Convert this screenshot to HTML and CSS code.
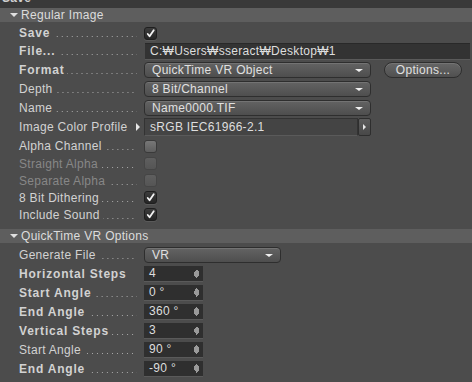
FILE: index.html
```html
<!DOCTYPE html>
<html lang="en">
<head>
  <meta charset="UTF-8">
  <title>Save</title>
  <link rel="stylesheet" href="styles.css">
</head>
<body>
  <div class="tab"><span>Save</span></div>

  <div class="head"><i class="tri"></i>Regular Image</div>
  <div class="group">
    <div class="row h18">
      <span class="lbl b"><span>Save</span><i class="dots"></i></span>
      <span class="cb on"><svg viewBox="0 0 12 12"><path d="M3 6.5 L5 9 L9.5 2.5"/></svg></span>
    </div>
    <div class="row h18">
      <span class="lbl b"><span>File...</span><i class="dots"></i></span>
      <span class="field wide">C:₩Users₩sseract₩Desktop₩1</span>
    </div>
    <div class="row">
      <span class="lbl b"><span>Format</span><i class="dots"></i></span>
      <span class="ctl">
        <span class="drop fmt">QuickTime VR Object<i class="arr"></i></span>
        <span class="btn">Options...</span>
      </span>
    </div>
    <div class="row">
      <span class="lbl"><span>Depth</span><i class="dots"></i></span>
      <span class="drop fmt">8 Bit/Channel<i class="arr"></i></span>
    </div>
    <div class="row">
      <span class="lbl"><span>Name</span><i class="dots"></i></span>
      <span class="drop fmt">Name0000.TIF<i class="arr"></i></span>
    </div>
    <div class="row h20">
      <span class="lbl"><span>Image Color Profile</span><i class="more"></i></span>
      <span class="ctl">
        <span class="field icp">sRGB IEC61966-2.1</span>
        <span class="side"><i></i></span>
      </span>
    </div>
    <div class="row h18">
      <span class="lbl"><span>Alpha Channel</span><i class="dots"></i></span>
      <span class="cb"></span>
    </div>
    <div class="row h17 off">
      <span class="lbl"><span>Straight Alpha</span><i class="dots"></i></span>
      <span class="cb"></span>
    </div>
    <div class="row h17 off">
      <span class="lbl"><span>Separate Alpha</span><i class="dots"></i></span>
      <span class="cb"></span>
    </div>
    <div class="row h17">
      <span class="lbl"><span>8 Bit Dithering</span><i class="dots"></i></span>
      <span class="cb on"><svg viewBox="0 0 12 12"><path d="M3 6.5 L5 9 L9.5 2.5"/></svg></span>
    </div>
    <div class="row h17">
      <span class="lbl"><span>Include Sound</span><i class="dots"></i></span>
      <span class="cb on"><svg viewBox="0 0 12 12"><path d="M3 6.5 L5 9 L9.5 2.5"/></svg></span>
    </div>
  </div>

  <div class="head"><i class="tri"></i>QuickTime VR Options</div>
  <div class="group">
    <div class="row">
      <span class="lbl"><span>Generate File</span><i class="dots"></i></span>
      <span class="drop gen">VR<i class="arr"></i></span>
    </div>
    <div class="row">
      <span class="lbl b"><span>Horizontal Steps</span></span>
      <span class="num">4<i class="spin"></i></span>
    </div>
    <div class="row">
      <span class="lbl b"><span>Start Angle</span><i class="dots"></i></span>
      <span class="num">0 °<i class="spin"></i></span>
    </div>
    <div class="row">
      <span class="lbl b"><span>End Angle</span><i class="dots"></i></span>
      <span class="num">360 °<i class="spin"></i></span>
    </div>
    <div class="row">
      <span class="lbl b"><span>Vertical Steps</span><i class="dots"></i></span>
      <span class="num">3<i class="spin"></i></span>
    </div>
    <div class="row">
      <span class="lbl"><span>Start Angle</span><i class="dots"></i></span>
      <span class="num">90 °<i class="spin"></i></span>
    </div>
    <div class="row">
      <span class="lbl b"><span>End Angle</span><i class="dots"></i></span>
      <span class="num">-90 °<i class="spin"></i></span>
    </div>
  </div>
</body>
</html>
```

FILE: styles.css
```css
body {
  margin: 0;
  width: 472px;
  height: 382px;
  overflow: hidden;
  background-color: #4c4c4c;
  font-family: "Liberation Sans", "DejaVu Sans", sans-serif;
  font-size: 12px;
  letter-spacing: 0.3px;
  color: #d2d2d2;
}
.tab {
  height: 8px;
  overflow: hidden;
  background-color: #393939;
  border-bottom: 0;
}
.tab span {
  display: block;
  margin-top: -9px;
  padding-left: 2px;
  line-height: 14px;
  font-weight: bold;
  color: #cfcfcf;
}
.head {
  height: 14px;
  display: flex;
  align-items: center;
  background-color: #5e5e5e;
  color: #dcdcdc;
  padding-left: 10px;
  line-height: 14px;
}
.tri {
  width: 0;
  height: 0;
  border-left: 4px solid transparent;
  border-right: 4px solid transparent;
  border-top: 4px solid #e0e0e0;
  margin-right: 3px;
}
.group {
  padding-top: 2px;
  margin-bottom: 6px;
}
.row {
  display: grid;
  grid-template-columns: 144px 1fr;
  align-items: center;
  height: 19px;
}
.row.h17 { height: 17px; }
.row.h18 { height: 18px; }
.row.h20 { height: 20px; }
.lbl {
  display: flex;
  align-items: baseline;
  padding-left: 19px;
  padding-right: 7px;
  white-space: nowrap;
}
.lbl.b {
  font-weight: bold;
  letter-spacing: 0.8px;
}
.off .lbl {
  color: #878787;
}
.dots {
  flex: 1;
  height: 1px;
  margin-left: 3px;
  background-image: linear-gradient(to right, #a8a8a8 1px, transparent 1px);
  background-size: 5px 1px;
  background-repeat: repeat-x;
  background-position: right;
}
.more {
  margin-left: auto;
  align-self: center;
  width: 0;
  height: 0;
  border-top: 4px solid transparent;
  border-bottom: 4px solid transparent;
  border-left: 4px solid #e6e6e6;
  margin-right: -3px;
}
.ctl {
  display: flex;
  align-items: center;
}
.cb {
  width: 11px;
  height: 11px;
  border-radius: 3px;
  background: linear-gradient(#777, #5e5e5e);
  border: 1px solid #3a3a3a;
}
.off .cb {
  background: linear-gradient(#5f5f5f, #555);
  border-color: #454545;
}
.cb.on {
  background: linear-gradient(#3c3c3c, #262626);
  border-color: #1f1f1f;
  box-shadow: 0 1px 0 #5a5a5a;
}
.cb svg {
  display: block;
  width: 11px;
  height: 11px;
}
.cb path {
  fill: none;
  stroke: #f2f2f2;
  stroke-width: 2;
  stroke-linecap: round;
  stroke-linejoin: round;
}
.field {
  display: block;
  height: 15px;
  line-height: 15px;
  padding-left: 5px;
  background-color: #333;
  border-top: 1px solid #292929;
  border-bottom: 1px solid #5a5a5a;
  color: #dedede;
  box-sizing: content-box;
}
.field.wide {
  width: 320px;
  margin-left: 1px;
}
.field.icp {
  width: 207px;
  height: 16px;
  line-height: 16px;
  background-color: #444;
  border: 1px solid #333;
  border-bottom-color: #5a5a5a;
}
.side {
  width: 11px;
  height: 16px;
  background: linear-gradient(#5c5c5c, #484848);
  border: 1px solid #2e2e2e;
  border-radius: 2px;
  display: flex;
  align-items: center;
  justify-content: center;
}
.side i {
  width: 0;
  height: 0;
  border-top: 3px solid transparent;
  border-bottom: 3px solid transparent;
  border-left: 3px solid #e6e6e6;
}
.drop {
  position: relative;
  display: block;
  height: 14px;
  line-height: 14px;
  padding-left: 7px;
  border: 1px solid #2e2e2e;
  border-radius: 4px;
  background: linear-gradient(#636363, #4e4e4e);
  box-shadow: inset 0 1px 0 #737373;
  color: #e0e0e0;
}
.drop.fmt {
  width: 218px;
}
.drop.gen {
  width: 128px;
}
.arr {
  position: absolute;
  right: 7px;
  top: 6px;
  width: 0;
  height: 0;
  border-left: 4px solid transparent;
  border-right: 4px solid transparent;
  border-top: 3px solid #f0f0f0;
}
.btn {
  margin-left: 13px;
  width: 76px;
  height: 14px;
  line-height: 14px;
  text-align: center;
  border: 1px solid #2e2e2e;
  border-radius: 8px;
  background: linear-gradient(#666, #505050);
  box-shadow: inset 0 1px 0 #747474;
  color: #e0e0e0;
}
.num {
  position: relative;
  display: block;
  width: 54px;
  height: 15px;
  line-height: 15px;
  padding-left: 5px;
  background-color: #2f2f2f;
  border-bottom: 1px solid #5a5a5a;
  color: #dedede;
}
.spin {
  position: absolute;
  right: 4px;
  top: 3px;
  width: 5px;
  height: 9px;
  background:
    linear-gradient(to bottom right, transparent 50%, #9a9a9a 50%) left top / 3px 3px no-repeat,
    linear-gradient(to bottom left, transparent 50%, #9a9a9a 50%) right top / 2px 3px no-repeat,
    linear-gradient(to top right, transparent 50%, #9a9a9a 50%) left bottom / 3px 3px no-repeat,
    linear-gradient(to top left, transparent 50%, #9a9a9a 50%) right bottom / 2px 3px no-repeat;
}
.spin::after {
  content: "";
  position: absolute;
  left: 0;
  top: 3px;
  width: 5px;
  height: 3px;
  background-color: #9a9a9a;
}
```
